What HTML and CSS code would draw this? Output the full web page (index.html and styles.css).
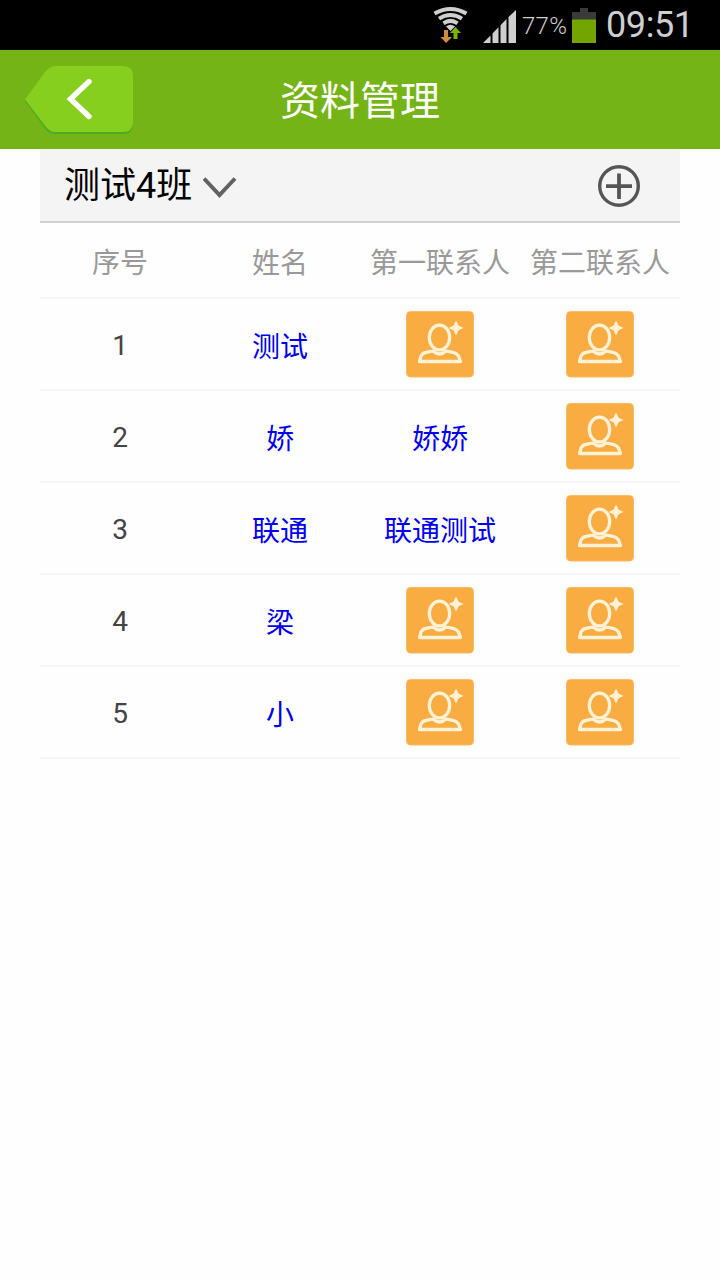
FILE: index.html
```html
<!DOCTYPE html>
<html lang="zh-CN">

<head>
    <meta charset="UTF-8">
    <meta name="viewport" content="width=device-width, initial-scale=1.0">
    <title>资料管理</title>

    <link rel="stylesheet" href="styles.css">
</head>

<body>
    <!-- shared icon for an empty contact -->
    <svg class="symbols">
        <symbol id="add-person" viewBox="0 0 68 68">
            <rect x="0.5" y="0.5" width="67" height="65.5" rx="4" fill="#f9ac41" stroke="#f5bd62" />
            <g fill="none" stroke="#fff2d6" stroke-width="3.3" stroke-linejoin="round">
                <ellipse cx="33.5" cy="26.5" rx="10.2" ry="12.3" />
                <path d="M13.5 50.5L15 45Q16.5 42 20 41.3L27 40Q33.5 46 40 40L47 41.3Q50.5 42 52.5 45L54.5 50.5Z" />
            </g>
            <path d="M50 11.5L51.8 15.2L55.5 17L51.8 18.8L50 22.5L48.2 18.8L44.5 17L48.2 15.2Z" fill="#fff2d6" stroke="#fff2d6" stroke-width="1.8" />
        </symbol>
    </svg>

    <div class="statusbar">
        <svg class="wifi" width="36" height="50" viewBox="0 0 36 50">
            <g fill="none" stroke="#cfcfcf" stroke-width="4">
                <path d="M1.5 13.5Q17.5 4.5 33.5 13.5" />
                <path d="M6 18.6Q17.5 11.4 29 18.6" />
                <path d="M10.5 23.3Q17.5 18.5 24.5 23.3" />
            </g>
            <path d="M13 26.5Q17.5 22.8 22 26.5L17.5 31Z" fill="#cfcfcf" />
            <path d="M11 30H15V37H19L13 43L7.5 37H11Z" fill="#d38b3c" />
            <path d="M22.5 27L28 33H24.5V39H20.5V33H17Z" fill="#78b400" />
        </svg>
        <svg class="signal" width="33" height="50" viewBox="0 0 33 50" fill="#cfcfcf">
            <path d="M0 43L7.5 35.5V43ZM9.5 43V33.5L15.5 27.3V43ZM17.5 43V25.2L23.5 19V43ZM25.5 43V17L33 10V43Z" />
        </svg>
        <span class="percent">77%</span>
        <svg class="battery" width="24" height="50" viewBox="0 0 24 50">
            <path d="M0 12H8V8H16V12H24V20H0Z" fill="#3a3a3a" />
            <path d="M0 19.5H24V43H0Z" fill="#73a500" />
        </svg>
        <span class="clock">09:51</span>
    </div>

    <header>
        <a class="back">
            <svg width="110" height="70" viewBox="0 0 110 70">
                <path d="M1 36L21 8Q25 3 31 3H99Q109 3 109 13V59Q109 69 99 69H31Q26 69 22 65Z" fill="#4cab25" />
                <path d="M1 34.5L21 7Q26 1 31 1H99Q109 1 109 11V57Q109 67 99 67H31Q26 67 22 62Z" fill="#86cf1f" />
                <path d="M65 16.5L46.5 34L65 51.5" fill="none" stroke="#fff" stroke-width="5.4" stroke-linecap="round" />
            </svg>
        </a>
        <h1>资料管理</h1>
    </header>

    <main>
        <div class="classbar">
            <span class="classname">测试4班</span>
            <svg class="arrow" width="34" height="24" viewBox="0 0 34 24">
                <path d="M1 1.5L16.5 18L32 1.5" fill="none" stroke="#626262" stroke-width="4" />
            </svg>
            <svg class="add" width="44" height="44" viewBox="0 0 44 44" fill="none" stroke="#555">
                <circle cx="22" cy="22" r="19.3" stroke-width="3.4" />
                <path d="M22 9.5V35M9 22.2H35" stroke-width="3.8" />
            </svg>
        </div>

        <div class="row head">
            <span>序号</span>
            <span>姓名</span>
            <span>第一联系人</span>
            <span>第二联系人</span>
        </div>
        <div class="row">
            <span>1</span>
            <a>测试</a>
            <svg class="person"><use href="#add-person" /></svg>
            <svg class="person"><use href="#add-person" /></svg>
        </div>
        <div class="row">
            <span>2</span>
            <a>娇</a>
            <a>娇娇</a>
            <svg class="person"><use href="#add-person" /></svg>
        </div>
        <div class="row">
            <span>3</span>
            <a>联通</a>
            <a>联通测试</a>
            <svg class="person"><use href="#add-person" /></svg>
        </div>
        <div class="row">
            <span>4</span>
            <a>梁</a>
            <svg class="person"><use href="#add-person" /></svg>
            <svg class="person"><use href="#add-person" /></svg>
        </div>
        <div class="row">
            <span>5</span>
            <a>小</a>
            <svg class="person"><use href="#add-person" /></svg>
            <svg class="person"><use href="#add-person" /></svg>
        </div>
    </main>
</body>

</html>
```

FILE: styles.css
```css
* {
    box-sizing: border-box;
}

body {
    margin: 0;
    background-color: #fefefe;
    font-family: Roboto, "Noto Sans CJK SC", sans-serif;
}

svg {
    display: block;
    flex: none;
}

.symbols {
    display: none;
}

.statusbar {
    display: flex;
    justify-content: flex-end;
    height: 50px;
    padding-right: 28px;
    background-color: #000;
    color: #cfcfcf;
    line-height: 50px;
    white-space: nowrap;
}

.signal {
    margin-left: 14px;
}

.percent {
    width: 51px;
    margin-left: 5px;
    padding-left: 1px;
    font-size: 24px;
    font-weight: 300;
    line-height: 52px;
    letter-spacing: 0.3px;
}

.battery {
    margin-right: 10px;
}

.clock {
    width: 86px;
    font-size: 36px;
    letter-spacing: -0.4px;
}

header {
    display: grid;
    grid-template-columns: 135px 1fr 135px;
    align-items: center;
    height: 99px;
    background-color: #75b417;
}

.back {
    padding-left: 24px;
}

h1 {
    margin: 0;
    padding-bottom: 4px;
    font-size: 40px;
    font-weight: 400;
    text-align: center;
    color: #fff;
}

main {
    padding: 0 40px;
}

.classbar {
    display: flex;
    align-items: center;
    height: 74px;
    padding: 2px 39px 0 24px;
    background-color: #f4f4f4;
    border-bottom: 2px solid #d0d0d0;
}

.classname {
    font-size: 36px;
    line-height: 70px;
    color: #000;
}

.arrow {
    margin: 5px 0 0 11px;
}

.add {
    margin-left: auto;
}

.row {
    display: grid;
    grid-template-columns: repeat(4, 1fr);
    align-items: center;
    justify-items: center;
    height: 92px;
    padding-top: 2px;
    border-bottom: 2px solid #f4f4f4;
    font-size: 28px;
    color: #444;
    white-space: nowrap;
}

.row a {
    color: #0000ee;
}

.head {
    height: 76px;
    color: #999;
}

.person {
    width: 68px;
    height: 68px;
}
```
